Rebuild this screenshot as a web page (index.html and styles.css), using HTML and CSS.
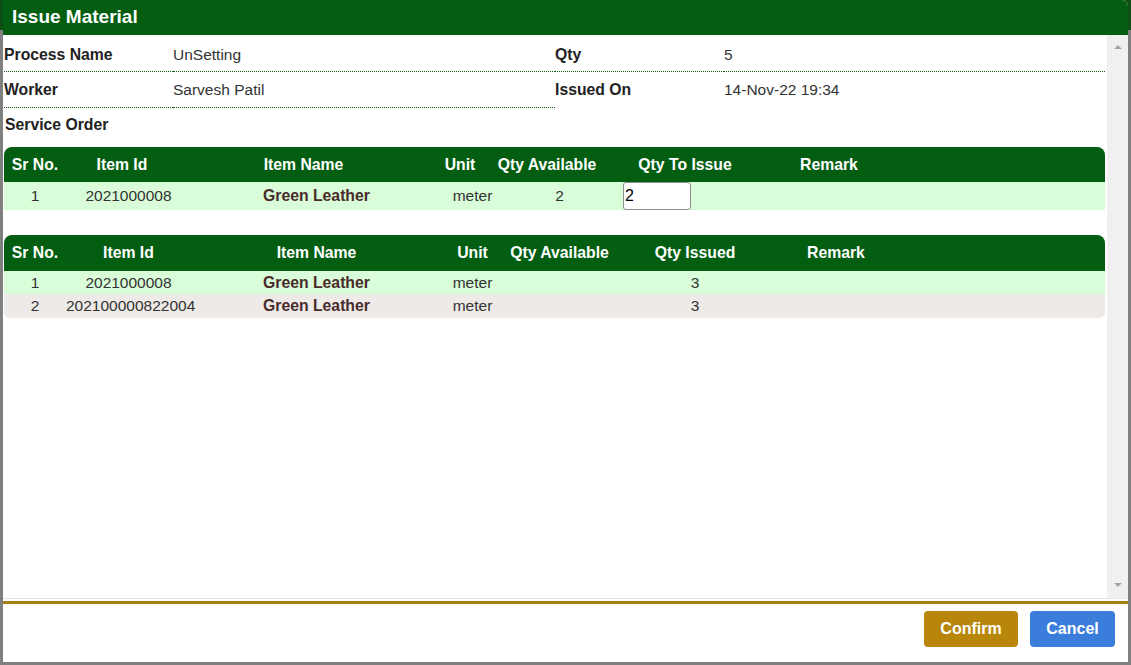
FILE: index.html
```html
<!DOCTYPE html>
<html lang="en">
<head>
    <meta charset="UTF-8">
    <title>Issue Material</title>
    <link rel="stylesheet" href="styles.css">
</head>
<body>

    <div class="dialog">
        <div class="dialog-title">Issue Material</div>

        <div class="dialog-body">
            <div class="content">

                <!-- process info -->
                <div class="info">
                    <div class="lbl line">Process Name</div>
                    <div class="val line">UnSetting</div>
                    <div class="lbl line">Qty</div>
                    <div class="val line">5</div>

                    <div class="lbl line">Worker</div>
                    <div class="val line">Sarvesh Patil</div>
                    <div class="lbl">Issued On</div>
                    <div class="val">14-Nov-22 19:34</div>
                </div>

                <div class="section">Service Order</div>

                <!-- to issue -->
                <div class="tbl">
                    <div class="thead cols-a">
                        <div>Sr No.</div>
                        <div>Item Id</div>
                        <div>Item Name</div>
                        <div>Unit</div>
                        <div>Qty Available</div>
                        <div>Qty To Issue</div>
                        <div>Remark</div>
                        <div></div>
                    </div>
                    <div class="row cols-b green tall">
                        <div>1</div>
                        <div>2021000008</div>
                        <div class="item">Green Leather</div>
                        <div>meter</div>
                        <div>2</div>
                        <div class="qty-cell"><input type="text" value="2"></div>
                        <div></div>
                        <div></div>
                    </div>
                </div>

                <!-- already issued -->
                <div class="tbl issued">
                    <div class="thead cols-b">
                        <div>Sr No.</div>
                        <div>Item Id</div>
                        <div>Item Name</div>
                        <div>Unit</div>
                        <div>Qty Available</div>
                        <div>Qty Issued</div>
                        <div>Remark</div>
                        <div></div>
                    </div>
                    <div class="row cols-b green">
                        <div>1</div>
                        <div>2021000008</div>
                        <div class="item">Green Leather</div>
                        <div>meter</div>
                        <div></div>
                        <div>3</div>
                        <div></div>
                        <div></div>
                    </div>
                    <div class="row cols-b grey last">
                        <div>2</div>
                        <div>202100000822004</div>
                        <div class="item">Green Leather</div>
                        <div>meter</div>
                        <div></div>
                        <div>3</div>
                        <div></div>
                        <div></div>
                    </div>
                </div>

            </div>
            <div class="scrollbar">
                <span class="arrow up"></span>
                <span class="arrow down"></span>
            </div>
        </div>

        <div class="dialog-footer">
            <button class="btn confirm">Confirm</button>
            <button class="btn cancel">Cancel</button>
        </div>
    </div>

</body>
</html>
```

FILE: styles.css
```css
body {
    margin: 0;
    height: 665px;
    overflow: hidden;
    font-family: "Liberation Sans", Arial, sans-serif;
    font-size: 15.5px;
    color: #333;
    background: linear-gradient(#0d4f14 0, #0d4f14 30px, #808080 30px);
}
.dialog {
    margin: 0 3px;
    height: 662px;
    background: #fff;
    border-top-right-radius: 6px;
    overflow: hidden;
    display: flex;
    flex-direction: column;
}
.dialog-title {
    height: 35px;
    line-height: 33px;
    padding-left: 9px;
    background: #035e12;
    color: #fff;
    font-size: 19px;
    font-weight: bold;
}
.dialog-body {
    height: 563px;
    display: flex;
    border-bottom: 1px solid #e4e4e4;
}
.content {
    flex: 1;
    padding: 2px 2px 0 1px;
}
.scrollbar {
    width: 21px;
    background: #f0f0f0;
    display: flex;
    flex-direction: column;
    justify-content: space-between;
    align-items: center;
    padding: 10px 0 11px;
    box-sizing: border-box;
}
.arrow {
    width: 0;
    height: 0;
    border-left: 4px solid transparent;
    border-right: 4px solid transparent;
}
.arrow.up { border-bottom: 4px solid #a3a3a3; }
.arrow.down { border-top: 4px solid #a3a3a3; }

/* info block */
.info {
    display: grid;
    grid-template-columns: 169px 382px 169px 1fr;
}
.info div {
    height: 34px;
    line-height: 35px;
    white-space: nowrap;
}
.info div:nth-child(n+5) {
    height: 35px;
}
.info .line {
    border-bottom: 1px dotted #0a5d0a;
}
.lbl {
    font-size: 15.75px;
    font-weight: bold;
    color: #222;
}
.section {
    padding: 7px 0 0 1px;
    line-height: 20px;
    margin-bottom: 12px;
    font-size: 15.75px;
    font-weight: bold;
    color: #222;
}

/* tables */
.tbl {
    margin-bottom: 25px;
}
.cols-a {
    display: grid;
    grid-template-columns: 62px 112px 251px 62px 112px 164px 124px 1fr;
}
.cols-b {
    display: grid;
    grid-template-columns: 62px 125px 251px 61px 113px 158px 124px 1fr;
}
.thead {
    height: 35px;
    line-height: 35px;
    background: #035e12;
    color: #fff;
    font-size: 15.75px;
    font-weight: bold;
    border-radius: 8px 8px 0 0;
}
.issued .thead {
    height: 36px;
    line-height: 36px;
}
.thead div, .row div {
    text-align: center;
    white-space: nowrap;
}
.row {
    height: 23px;
    line-height: 23px;
}
.row.tall {
    height: 28px;
    line-height: 28px;
}
.row.last {
    height: 24px;
    line-height: 24px;
    border-radius: 0 0 6px 6px;
}
.green { background: #d8fdd8; }
.grey { background: #eeeae7; }
.item {
    font-size: 15.75px;
    font-weight: bold;
    color: #4a2b2b;
}
.row .qty-cell {
    text-align: left;
    padding-left: 7px;
}
.qty-cell input {
    width: 68px;
    height: 28px;
    box-sizing: border-box;
    border: 1px solid #8f8f8f;
    border-radius: 3px;
    padding: 0 1px;
    font-family: "Liberation Sans", Arial, sans-serif;
    font-size: 16px;
    color: #000;
    vertical-align: top;
}

/* footer */
.dialog-footer {
    flex: 1;
    margin-top: 2px;
    border-top: 3px solid #a37c15;
    display: flex;
    justify-content: flex-end;
    align-items: flex-start;
    gap: 12px;
    padding: 7px 13px 0 0;
}
.btn {
    height: 36px;
    border: none;
    border-radius: 4px;
    padding: 0 16px;
    color: #fff;
    font-family: "Liberation Sans", Arial, sans-serif;
    font-size: 16px;
    font-weight: bold;
    cursor: pointer;
}
.confirm { background: #b8860b; width: 94px; }
.cancel { background: #3a7ddb; width: 85px; }
```
